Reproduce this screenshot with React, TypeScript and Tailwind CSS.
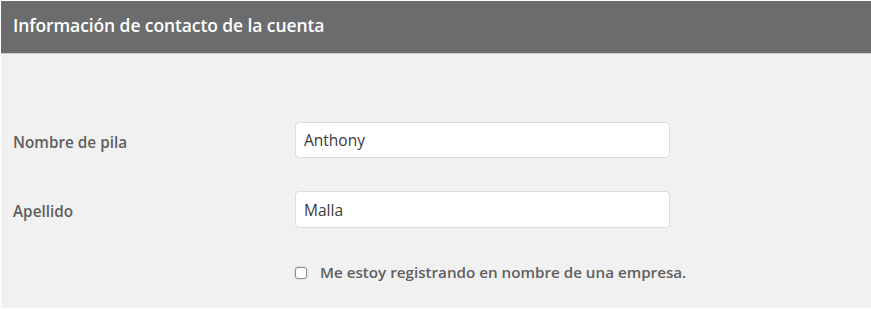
import React, { useState } from 'react';

export default function App() {
    const [nombre, setNombre] = useState('Anthony');
    const [apellido, setApellido] = useState('Malla');
    const [empresa, setEmpresa] = useState(false);

    return (
        <div className="w-[871px] h-[309px] bg-white pt-px pl-px" style={{ fontFamily: '"Open Sans", "Lato", sans-serif' }}>
            <div className="h-[307px] bg-[#f1f1f1]">
                <div className="h-[53px] bg-[#6b6c6e] flex items-center px-3 border-b border-[#c9cacb]">
                    <h2 className="text-[17.5px] font-semibold text-white tracking-[-0.1px] -mt-[3px]">Información de contacto de la cuenta</h2>
                </div>

                <div className="pt-[68px]">
                    <div className="flex items-center h-[36px]">
                        <label className="w-[294px] pl-3 pt-[5px] text-[15.3px] font-semibold text-[#5f5f61]">Nombre de pila</label>
                        <input
                            value={nombre}
                            onChange={(e) => setNombre(e.target.value)}
                            className="w-[375px] h-[36px] bg-white border border-[#dcdcdc] rounded-[4px] px-2 text-[15.5px] text-[#3a3a3a] outline-none"
                        />
                    </div>
                    <div className="flex items-center h-[37px] mt-[33px]">
                        <label className="w-[294px] pl-3 pt-[4px] text-[15.3px] font-semibold text-[#5f5f61]">Apellido</label>
                        <input
                            value={apellido}
                            onChange={(e) => setApellido(e.target.value)}
                            className="w-[375px] h-[37px] bg-white border border-[#dcdcdc] rounded-[4px] px-2 text-[15.5px] text-[#3a3a3a] outline-none"
                        />
                    </div>
                    <label className="flex items-center ml-[294px] mt-[33px] gap-[13px] cursor-pointer w-fit">
                        <input
                            type="checkbox"
                            checked={empresa}
                            onChange={(e) => setEmpresa(e.target.checked)}
                            className="appearance-none w-[12px] h-[12px] border border-[#8a8c90] rounded-[3px] bg-white shadow-[0_0_2px_rgba(120,160,200,0.5)] checked:bg-[#6b6c6e] mt-[1px]"
                        />
                        <span className="text-[15.2px] font-semibold text-[#5f5f61]">Me estoy registrando en nombre de una empresa.</span>
                    </label>
                </div>
            </div>
        </div>
    );
}
